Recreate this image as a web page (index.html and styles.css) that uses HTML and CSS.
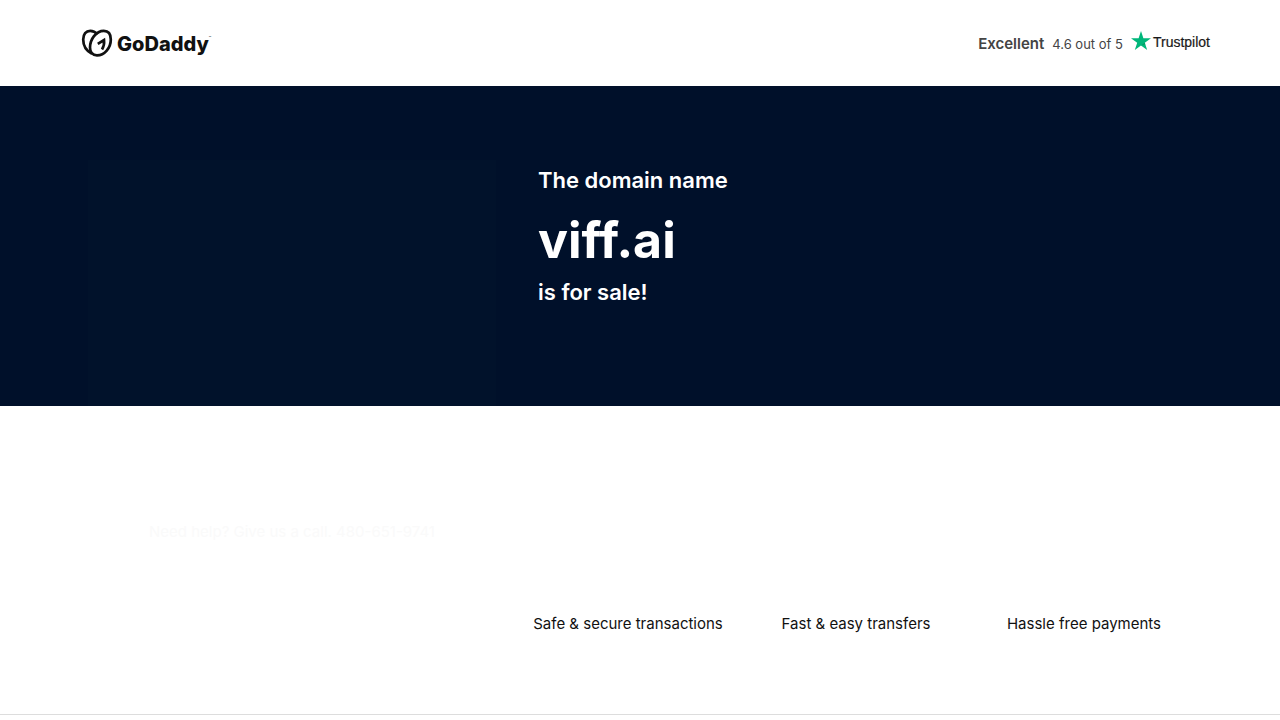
FILE: index.html
```html
<!DOCTYPE html>
<html lang="en">
<head>
    <meta charset="UTF-8">
    <meta name="viewport" content="width=device-width, initial-scale=1.0">
    <title>viff.ai is for sale</title>
    <link rel="stylesheet" href="styles.css">
</head>
<body>
    <header class="header">
        <a class="logo" href="#">
            <svg class="logo-mark" viewBox="0 0 32 30" aria-hidden="true">
                <g fill="none" stroke="#111" stroke-width="2.7">
                    <path d="M11 25.800C5.500 23 2.200 17.500 2.200 11.500C2.200 6 5 2.800 9.200 2.800C12 2.800 14.500 4 16.600 6.200"/>
                    <path d="M16 27.400C11.500 27.400 9 24 9 19.600C9 11.500 15 2.800 22.800 2.800C27.200 2.800 29.800 6 29.800 11.500C29.800 20 23.500 27.400 16 27.400Z"/>
                    <path d="M16.800 15.800L23 12C23.400 15.400 22.800 18.600 21 21.400"/>
                </g>
            </svg>
            <span class="logo-text">GoDaddy</span>
            <span class="logo-tm">™</span>
        </a>
        <div class="rating">
            <strong class="rating-label">Excellent</strong>
            <span class="rating-score">4.6 out of 5</span>
            <a class="trustpilot" href="#">
                <svg class="star" viewBox="0 0 20 19" aria-hidden="true">
                    <path fill="#00b67a" d="M10 0L12.400 7.200H20L13.800 11.700L16.200 19L10 14.500L3.800 19L6.200 11.700L0 7.200H7.600Z"/>
                    <path fill="#009a62" d="M14.300 13.300L13.800 11.700L10 14.500Z"/>
                </svg>
                <span class="trustpilot-text">Trustpilot</span>
            </a>
        </div>
    </header>
    <main>
        <section class="hero">
            <div class="card"></div>
            <h1 class="headline">
                <span>The domain name</span>
                <span class="domain">viff.ai</span>
                <span>is for sale!</span>
            </h1>
        </section>
        <section class="details">
            <p class="help">Need help? Give us a call. 480-651-9741</p>
            <ul class="features">
                <li>Safe &amp; secure transactions</li>
                <li>Fast &amp; easy transfers</li>
                <li>Hassle free payments</li>
            </ul>
        </section>
    </main>
    <footer class="footer"></footer>
</body>
</html>
```
FILE: styles.css
```css
* {
    box-sizing: border-box;
}
body {
    margin: 0;
    font-family: Inter, "Liberation Sans", sans-serif;
    font-size: 15px;
    line-height: 24px;
    color: #111;
    background-color: #fff;
}
a {
    color: inherit;
    text-decoration: none;
}
.header {
    display: flex;
    align-items: center;
    justify-content: space-between;
    height: 86px;
    padding: 0 70px 0 81px;
}
.logo {
    display: flex;
    align-items: center;
}
.logo-mark {
    width: 32px;
    height: 30px;
    margin-right: 4px;
}
.logo-text {
    padding-top: 2px;
    font-size: 20px;
    font-weight: 800;
}
.logo-tm {
    align-self: flex-start;
    font-size: 4px;
    line-height: 20px;
}
.rating {
    display: flex;
    align-items: center;
    gap: 8px;
    padding-top: 2px;
    color: #444;
}
.rating-label {
    font-weight: 600;
}
.rating-score {
    font-size: 13px;
}
.trustpilot {
    display: flex;
    align-items: center;
    gap: 2px;
    color: #191919;
    padding-bottom: 4px;
}
.star {
    width: 20px;
    height: 19px;
    margin-bottom: 4px;
}
.trustpilot-text {
    font-family: "Liberation Sans", sans-serif;
    font-size: 14px;
    -webkit-text-stroke: 0.2px #191919;
}
.hero,
.details {
    display: grid;
    grid-template-columns: 12fr 19fr;
    padding: 0 82px;
}
.hero {
    min-height: 320px;
    padding-top: 74px;
    color: #fff;
    background-color: #00102a;
}
.card {
    margin: 0 18px 0 6px;
    background-color: #01122b;
}
.headline {
    display: flex;
    flex-direction: column;
    margin: 0;
    padding-left: 24px;
    font-size: 22px;
    font-weight: 600;
    line-height: 40px;
}
.domain {
    padding-top: 8px;
    font-size: 50px;
    font-weight: 700;
    line-height: 64px;
}
.details {
    align-items: start;
    min-height: 308px;
    padding-top: 114px;
}
.help {
    margin: 0;
    padding: 0 18px 0 6px;
    text-align: center;
    color: #fafafa;
}
.features {
    display: grid;
    grid-template-columns: repeat(3, 1fr);
    margin: 0;
    padding: 92px 0 0;
    list-style: none;
    text-align: center;
}
.footer {
    border-top: 1px solid #ddd;
}
```
